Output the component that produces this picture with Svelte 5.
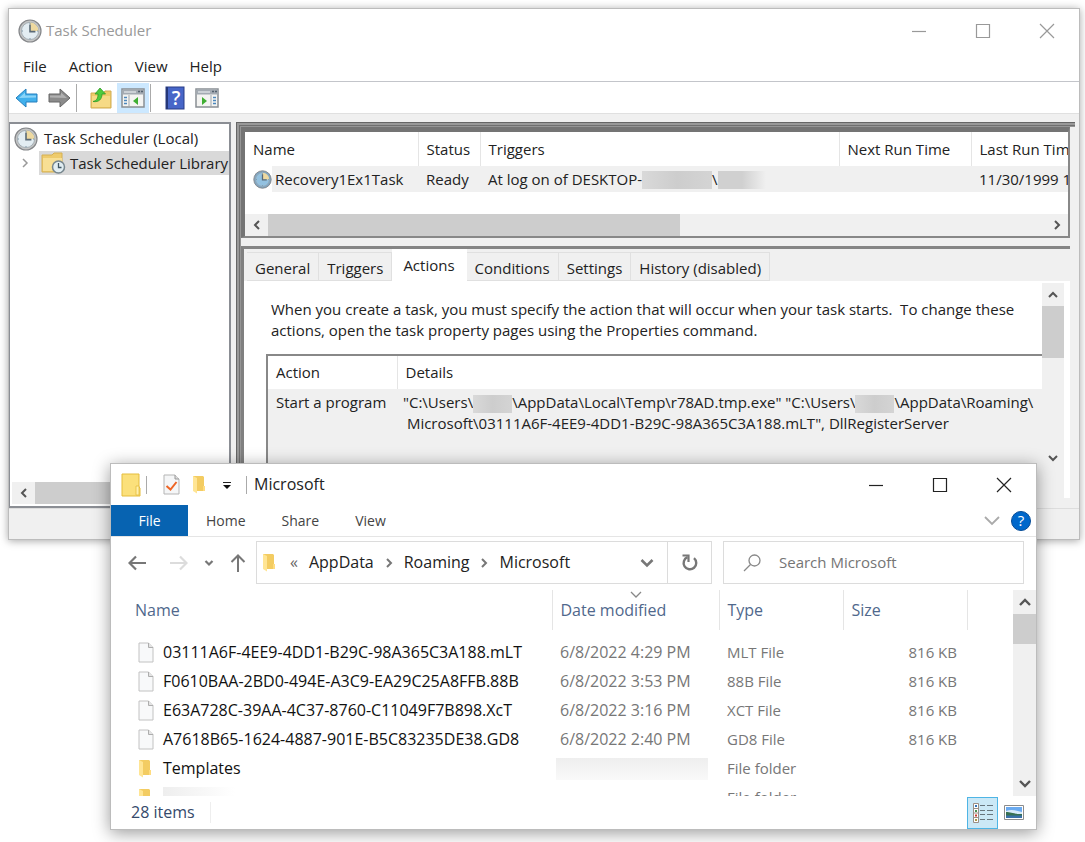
<script lang="ts">
	interface FileRow {
		name: string;
		modified: string;
		type: string;
		size: string;
		folder?: boolean;
	}

	const menus = ['File', 'Action', 'View', 'Help'];
	const tabs = ['General', 'Triggers', 'Actions', 'Conditions', 'Settings', 'History (disabled)'];
	const ribbon = ['File', 'Home', 'Share', 'View'];
	const crumbs = ['AppData', 'Roaming', 'Microsoft'];

	const files: FileRow[] = [
		{ name: '03111A6F-4EE9-4DD1-B29C-98A365C3A188.mLT', modified: '6/8/2022 4:29 PM', type: 'MLT File', size: '816 KB' },
		{ name: 'F0610BAA-2BD0-494E-A3C9-EA29C25A8FFB.88B', modified: '6/8/2022 3:53 PM', type: '88B File', size: '816 KB' },
		{ name: 'E63A728C-39AA-4C37-8760-C11049F7B898.XcT', modified: '6/8/2022 3:16 PM', type: 'XCT File', size: '816 KB' },
		{ name: 'A7618B65-1624-4887-901E-B5C83235DE38.GD8', modified: '6/8/2022 2:40 PM', type: 'GD8 File', size: '816 KB' },
		{ name: 'Templates', modified: '', type: 'File folder', size: '', folder: true },
		{ name: '', modified: '', type: 'File folder', size: '', folder: true }
	];

	let activeTab = $state('Actions');
	let search = $state('');
</script>

{#snippet clock(size: number, face: string, rim: string)}
	<svg width={size} height={size} viewBox="0 0 24 24" aria-hidden="true">
		<circle cx="12" cy="12" r="11" fill={rim} stroke="#85878a" stroke-width="1.2" />
		<circle cx="12" cy="12" r="8.6" fill={face} stroke="#9aa6ad" stroke-width="0.8" />
		<path d="M12 12V3.6a8.4 8.4 0 0 1 8.4 8.4z" fill="#eed9a0" />
		<path d="M12 5.4v7.2h5.4" fill="none" stroke="#5a6a76" stroke-width="1.6" />
		<path d="M12 4v1M12 19v1M4 12h1M19 12h1" stroke="#7890a0" stroke-width="1" />
	</svg>
{/snippet}

{#snippet chevron(points: string, color: string, weight: number)}
	<svg width="12" height="12" viewBox="0 0 12 12" aria-hidden="true">
		<polyline {points} fill="none" stroke={color} stroke-width={weight} />
	</svg>
{/snippet}

{#snippet folderIcon()}
	<svg width="14" height="19" viewBox="0 0 14 19" aria-hidden="true">
		<path d="M1 1h10l1 1v9l1 1v3l-1 1H4z" fill="#f3cc62" />
		<path d="M1 1l4 2v15.500l-4-2.500z" fill="#ffe594" />
		<path d="M11 11h2v5h-2z" fill="#ffdc80" />
	</svg>
{/snippet}

{#snippet fileIcon()}
	<svg width="16" height="21" viewBox="0 0 16 21" aria-hidden="true">
		<path d="M1 1h9.500l4.500 4.500v14.500H1z" fill="#f8f9fa" stroke="#c2c2c2" />
		<path d="M10.500 1v4.500H15" fill="#e4e4e4" stroke="#adadad" />
	</svg>
{/snippet}

{#snippet windowButtons()}
	<div class="window-buttons">
		<button aria-label="Minimize">
			<svg width="16" height="16" viewBox="0 0 16 16"><path d="M1 8.500h14" /></svg>
		</button>
		<button aria-label="Maximize">
			<svg width="16" height="16" viewBox="0 0 16 16"><path d="M1.500 1.500h13v13h-13z" /></svg>
		</button>
		<button aria-label="Close">
			<svg width="16" height="16" viewBox="0 0 16 16"><path d="M1 1l14 14M15 1L1 15" /></svg>
		</button>
	</div>
{/snippet}

{#snippet consoleIcon(flip: boolean)}
	<svg width="24" height="20" viewBox="0 0 24 20" aria-hidden="true">
		<path d="M1 1h22v18H1z" fill="#f4f4f2" stroke="#898e94" stroke-width="1.500" />
		<path d="M1.500 1.500h21v5h-21z" fill="#a3aab2" />
		<path d="M3 4h12" stroke="#dfe3e6" stroke-width="1.400" />
		<path d="M17 3.500h2M20 3.500h2" stroke="#53616e" stroke-width="1.500" />
		{#if flip}
			<path d="M16 7v12" stroke="#a0a6ab" />
			<path d="M18 9.500h3M18 12.500h3M18 15.500h3" stroke="#4b87bd" stroke-width="1.500" />
			<path d="M7 9l5 4-5 4z" fill="#3fae32" />
		{:else}
			<path d="M8 7v12" stroke="#a0a6ab" />
			<path d="M3 9.500h3M3 12.500h3M3 15.500h3" stroke="#4b87bd" stroke-width="1.500" />
			<path d="M17 9l-5 4 5 4z" fill="#3fae32" />
		{/if}
	</svg>
{/snippet}

<main class="desktop">
	<section class="window scheduler" aria-label="Task Scheduler">
		<header class="title-bar">
			{@render clock(24, '#e3edf2', '#c4c5c5')}
			<span class="title">Task Scheduler</span>
			{@render windowButtons()}
		</header>

		<nav class="menu-bar">
			{#each menus as menu (menu)}
				<button>{menu}</button>
			{/each}
		</nav>

		<div class="toolbar">
			<button aria-label="Back">
				<svg width="24" height="20" viewBox="0 0 24 20">
					<path d="M1 10L11 1v5h11v8H11v5z" fill="#41b0ec" stroke="#267fbd" />
					<path d="M4 10l6-5.500v3h11v2z" fill="#8bd4f8" />
				</svg>
			</button>
			<button aria-label="Forward">
				<svg width="24" height="20" viewBox="0 0 24 20">
					<path d="M23 10L13 1v5H2v8h11v5z" fill="#8b8b8b" stroke="#666" />
					<path d="M20 10l-6-5.500v3H3v2z" fill="#b1b1b1" />
				</svg>
			</button>
			<span class="separator"></span>
			<button aria-label="Up one level">
				<svg width="22" height="22" viewBox="0 0 22 22">
					<path d="M1 6h12l2-2h6v17H1z" fill="#efcb68" stroke="#d0ac55" />
					<path d="M2 9h18v11H2z" fill="#f6da86" />
					<path d="M3 14.500c4-1 5-3.500 5-7.500H5l5-6 5.500 6H12c0 5-3 8.500-9 7.500z" fill="#4ecb3d" stroke="#2e9a27" stroke-width="0.800" />
				</svg>
			</button>
			<button class="pressed" aria-label="Show console tree">{@render consoleIcon(false)}</button>
			<span class="separator"></span>
			<button aria-label="Help">
				<svg width="20" height="24" viewBox="0 0 20 24">
					<rect x="1" y="1" width="18" height="22" fill="#4766c8" stroke="#283c87" />
					<path d="M2 1v22" stroke="#253778" stroke-width="2" />
					<text x="11" y="19" text-anchor="middle" font-size="19" font-weight="600" fill="#fff">?</text>
				</svg>
			</button>
			<button aria-label="Show action pane">{@render consoleIcon(true)}</button>
		</div>

		<div class="console">
			<aside class="tree">
				<div class="tree-root">
					{@render clock(24, '#e3edf2', '#c4c5c5')}
					<span>Task Scheduler (Local)</span>
				</div>
				<div class="tree-child">
					<span class="expander">{@render chevron('4,2 8,6 4,10', '#9a9a9a', 1.5)}</span>
					<div class="tree-selected">
						<svg width="25" height="22" viewBox="0 0 25 22" aria-hidden="true">
							<path d="M1 3h10l2-2h8v19H1z" fill="#eecb6c" stroke="#d5b052" />
							<path d="M2 6h19v13H2z" fill="#f8df94" />
							<circle cx="17.500" cy="15" r="6" fill="#e1edf2" stroke="#76868e" stroke-width="1.500" />
							<path d="M17.500 11v4.500h3" fill="none" stroke="#3f5663" stroke-width="1.300" />
						</svg>
						<span>Task Scheduler Library</span>
					</div>
				</div>
				<div class="hscroll">
					<button aria-label="Scroll left">{@render chevron('8,2 4,6 8,10', '#555', 2)}</button>
					<div class="thumb tree-thumb"></div>
				</div>
			</aside>

			<div class="result">
				<div class="task-list">
					<table>
						<colgroup>
							<col class="c-name" /><col class="c-status" /><col class="c-triggers" /><col class="c-next" /><col class="c-last" />
						</colgroup>
						<thead>
							<tr>
								<th>Name</th>
								<th>Status</th>
								<th>Triggers</th>
								<th>Next Run Time</th>
								<th>Last Run Time</th>
							</tr>
						</thead>
						<tbody>
							<tr>
								<td class="task-name">
									<div>
										{@render clock(19, '#93c1e0', '#7fa6c4')}
										<span>Recovery1Ex1Task</span>
									</div>
								</td>
								<td>Ready</td>
								<td>At log on of DESKTOP-<span class="redacted host"></span>\<span class="redacted user"></span></td>
								<td></td>
								<td>11/30/1999 12:00:00 AM</td>
							</tr>
						</tbody>
					</table>
					<div class="hscroll">
						<button aria-label="Scroll left">{@render chevron('8,2 4,6 8,10', '#555', 2)}</button>
						<div class="thumb list-thumb"></div>
						<button class="end" aria-label="Scroll right">{@render chevron('4,2 8,6 4,10', '#555', 2)}</button>
					</div>
				</div>

				<div class="details">
					<div class="tabs" role="tablist">
						{#each tabs as tab (tab)}
							<button
								role="tab"
								class={{ active: activeTab === tab }}
								aria-selected={activeTab === tab}
								onclick={() => (activeTab = tab)}
							>
								{tab}
							</button>
						{/each}
					</div>
					<div class="tab-page">
						<div class="tab-content">
							<p>
								When you create a task, you must specify the action that will occur when your task starts.&nbsp; To change these<br />
								actions, open the task property pages using the Properties command.
							</p>
							<table class="actions">
								<colgroup><col class="c-action" /><col /></colgroup>
								<thead>
									<tr><th>Action</th><th>Details</th></tr>
								</thead>
								<tbody>
									<tr>
										<td>Start a program</td>
										<td class="command">
											"C:\Users\<span class="redacted"></span>\AppData\Local\Temp\r78AD.tmp.exe" "C:\Users\<span class="redacted"></span>\AppData\Roaming\<br />
											&nbsp;Microsoft\03111A6F-4EE9-4DD1-B29C-98A365C3A188.mLT", DllRegisterServer
										</td>
									</tr>
								</tbody>
							</table>
						</div>
						<div class="vscroll page-scroll">
							<button aria-label="Scroll up">{@render chevron('2,8 6,4 10,8', '#555', 2)}</button>
							<div class="thumb"></div>
							<button class="end" aria-label="Scroll down">{@render chevron('2,4 6,8 10,4', '#555', 2)}</button>
						</div>
					</div>
				</div>
			</div>
		</div>
		<footer class="scheduler-status"></footer>
	</section>

	<section class="window explorer" aria-label="Microsoft">
		<header class="title-bar">
			<svg width="20" height="24" viewBox="0 0 20 24" aria-hidden="true">
				<path d="M1 1h17v13l1 1v8H1z" fill="#fbe07b" stroke="#e5bd3c" />
				<path d="M15 13h3v9h-3z" fill="#fff0ad" stroke="#e5bd3c" stroke-width="0.800" />
			</svg>
			<span class="separator"></span>
			<div class="quick">
				<button aria-label="Properties">
					<svg width="17" height="21" viewBox="0 0 17 21">
						<path d="M1 1h11l4 4v15H1z" fill="#f5f6f7" stroke="#b5b5b5" />
						<path d="M12 1v4h4" fill="#ddd" stroke="#999" />
						<path d="M3.500 12l4 3.500 6-7.500" fill="none" stroke="#ee6424" stroke-width="2" />
					</svg>
				</button>
				<button aria-label="New folder">{@render folderIcon()}</button>
				<button aria-label="Customize Quick Access Toolbar">
					<svg width="10" height="10" viewBox="0 0 10 10"><path d="M1 2.500h8" stroke="#222" /><path d="M1 5h8L5 9z" fill="#111" /></svg>
				</button>
			</div>
			<span class="separator"></span>
			<span class="title">Microsoft</span>
			{@render windowButtons()}
		</header>

		<nav class="ribbon">
			{#each ribbon as item (item)}
				<button class={{ primary: item === 'File' }}>{item}</button>
			{/each}
			<div class="ribbon-end">
				<button aria-label="Expand the Ribbon">
					<svg width="16" height="10" viewBox="0 0 16 10"><path d="M1 1l7 7 7-7" fill="none" stroke="#aaa" stroke-width="1.800" /></svg>
				</button>
				<button class="help" aria-label="Help">?</button>
			</div>
		</nav>

		<div class="nav-row">
			<div class="history">
				<button aria-label="Back">
					<svg width="18" height="16" viewBox="0 0 18 16"><path d="M18 8H2M8 1.500L1.500 8 8 14.500" fill="none" stroke="#777" stroke-width="2.200" /></svg>
				</button>
				<button aria-label="Forward">
					<svg width="18" height="16" viewBox="0 0 18 16"><path d="M0 8h16M10 1.500L16.500 8 10 14.500" fill="none" stroke="#dcdcdc" stroke-width="2.200" /></svg>
				</button>
				<button class="recent" aria-label="Recent locations">
					<svg width="10" height="8" viewBox="0 0 10 8"><path d="M1.500 2L5 5.500 8.500 2" fill="none" stroke="#777" stroke-width="2.200" /></svg>
				</button>
				<button aria-label="Up">
					<svg width="16" height="18" viewBox="0 0 16 18"><path d="M8 18V2M1.500 8L8 1.500 14.500 8" fill="none" stroke="#777" stroke-width="2" /></svg>
				</button>
			</div>
			<div class="address">
				{@render folderIcon()}
				<span class="more">«</span>
				{#each crumbs as crumb, index (crumb)}
					{#if index > 0}
						<span class="crumb-sep">{@render chevron('4,2 8,6 4,10', '#777', 2)}</span>
					{/if}
					<button>{crumb}</button>
				{/each}
				<button class="address-drop" aria-label="Previous locations">
					<svg width="14" height="10" viewBox="0 0 14 10"><path d="M1.500 2L7 7.500 12.500 2" fill="none" stroke="#777" stroke-width="2.600" /></svg>
				</button>
				<button class="refresh" aria-label="Refresh">
					<svg width="18" height="18" viewBox="0 0 18 18">
						<path d="M11.500 3.200A6.300 6.300 0 1 1 5 4.200" fill="none" stroke="#777" stroke-width="2.400" transform="translate(18 0) scale(-1 1)" />
						<path d="M1.500 1.500H7.500v6.500" fill="none" stroke="#777" stroke-width="2.200" />
					</svg>
				</button>
			</div>
			<label class="search">
				<svg width="18" height="18" viewBox="0 0 18 18" aria-hidden="true">
					<circle cx="11.500" cy="6.500" r="5.500" fill="none" stroke="#888" stroke-width="1.300" />
					<path d="M7.500 10.500L1 17" stroke="#888" stroke-width="1.300" />
				</svg>
				<input type="search" placeholder="Search Microsoft" aria-label="Search Microsoft" bind:value={search} />
			</label>
		</div>

		<div class="files">
			<div class="file-list">
				<table>
					<colgroup>
						<col /><col class="c-date" /><col class="c-type" /><col class="c-size" /><col class="c-rest" />
					</colgroup>
					<thead>
						<tr>
							<th>Name</th>
							<th class="sorted">
								Date modified
								<svg width="12" height="7" viewBox="0 0 12 7" aria-hidden="true"><path d="M1 1l5 5 5-5" fill="none" stroke="#888" stroke-width="1.300" /></svg>
							</th>
							<th>Type</th>
							<th>Size</th>
							<td></td>
						</tr>
					</thead>
					<tbody>
						{#each files as file, index (index)}
							<tr>
								<td>
									<div class="file-name">
										<span class="file-icon">
											{#if file.folder}{@render folderIcon()}{:else}{@render fileIcon()}{/if}
										</span>
										{#if file.name}
											<span>{file.name}</span>
										{:else}
											<span class="faded short"></span>
										{/if}
									</div>
								</td>
								<td class={{ blank: !file.modified, modified: true }}>
									{#if file.modified}{file.modified}{:else if file.name}<span class="faded"></span>{/if}
								</td>
								<td>{file.type}</td>
								<td class="size">{file.size}</td>
								<td></td>
							</tr>
						{/each}
					</tbody>
				</table>
			</div>
			<div class="vscroll file-scroll">
				<button aria-label="Scroll up">{@render chevron('1,9 6,4 11,9', '#555', 2.4)}</button>
				<div class="thumb"></div>
				<button class="end" aria-label="Scroll down">{@render chevron('1,3 6,8 11,3', '#555', 2.4)}</button>
			</div>
		</div>

		<footer class="status-bar">
			<span class="count">28 items</span>
			<div class="views">
				<button class="selected" aria-label="Details view">
					<svg width="20" height="20" viewBox="0 0 20 20">
						<path d="M.5 .5h5v19h-5zM.5 5.500h5M.5 10h5M.5 14.500h5" fill="#fff" stroke="#9a8f86" />
						<path d="M2 3h2" stroke="#2f73b8" stroke-width="2" />
						<path d="M2 8h2" stroke="#4a9150" stroke-width="2" />
						<path d="M2 12.500h2" stroke="#cb3c30" stroke-width="2" />
						<path d="M2 17h2" stroke="#a99a4a" stroke-width="2" />
						<path d="M7 2.500h5M14 2.500h6M7 7.500h5M14 7.500h6M7 11.500h5M14 11.500h6M7 16.500h5M14 16.500h6" stroke="#67757d" />
					</svg>
				</button>
				<button aria-label="Large icons view">
					<svg width="20" height="15" viewBox="0 0 20 15">
						<path d="M.5 .5h19v14H.5z" fill="#fff" stroke="#8b8b8b" />
						<path d="M2 2h16v6H2z" fill="#6aaaf0" />
						<path d="M2 6c5-2 9-1 16 1v2H2z" fill="#d7eafa" />
						<path d="M2 7c5 0 7 2 16 2v2H2z" fill="#377052" />
						<path d="M2 10.500h16V13H2z" fill="#3970a8" />
					</svg>
				</button>
			</div>
		</footer>
	</section>
</main>

<style>
	:global(body) {
		margin: 0;
		background: #fff;
	}

	.desktop {
		position: relative;
		min-height: 100vh;
		box-sizing: border-box;
		padding: 8px 5px 0 8px;
		overflow: hidden;
		font-family: 'Open Sans', 'Noto Sans', sans-serif;
		font-size: 15px;
		line-height: 21px;
		color: #222;
	}

	.desktop * {
		box-sizing: border-box;
	}

	svg {
		display: block;
		flex-shrink: 0;
	}

	button {
		display: flex;
		align-items: center;
		justify-content: center;
		flex-shrink: 0;
		margin: 0;
		padding: 0;
		border: 0;
		background: none;
		color: inherit;
		font: inherit;
		white-space: nowrap;
	}

	table {
		border-collapse: collapse;
		table-layout: fixed;
	}

	th,
	td {
		padding: 0 0 0 8px;
		font-weight: 400;
		text-align: left;
		white-space: nowrap;
	}

	.window {
		display: flex;
		flex-direction: column;
		border: 1px solid #bcbcbc;
		background: #fff;
	}

	.title-bar {
		display: flex;
		align-items: center;
	}

	.window-buttons {
		display: flex;
		margin-left: auto;
	}

	.window-buttons button {
		width: 64px;
		height: 40px;
	}

	.window-buttons path {
		fill: none;
		stroke: currentColor;
		stroke-width: 1.2;
	}

	.separator {
		width: 1px;
		background: #aaa;
	}

	.thumb {
		background: #cdcdcd;
	}

	.hscroll {
		display: flex;
		height: 22px;
		background: #f0f0f0;
	}

	.hscroll button {
		width: 23px;
	}

	.vscroll {
		display: flex;
		flex-direction: column;
		flex-shrink: 0;
		background: #f0f0f0;
	}

	.vscroll button {
		height: 23px;
	}

	.vscroll .end {
		margin-top: auto;
	}

	.hscroll .end {
		margin-left: auto;
	}

	.redacted {
		display: inline-block;
		width: 39px;
		height: 18px;
		vertical-align: middle;
		background: linear-gradient(90deg, #d9d9d9, #cdcdcd 50%, #d4d4d4);
	}

	/* Task Scheduler */
	.scheduler {
		box-shadow: 0 1px 8px rgba(0, 0, 0, 0.35);
	}

	.scheduler .title-bar {
		height: 43px;
		padding-left: 9px;
		gap: 4px;
	}

	.scheduler .title,
	.scheduler .window-buttons {
		color: #999;
	}

	.menu-bar {
		display: flex;
		height: 30px;
		padding-left: 14px;
		gap: 22px;
		border-bottom: 1px solid #c3c5ca;
	}

	.toolbar {
		display: flex;
		align-items: center;
		height: 32px;
		padding-left: 2px;
		border-bottom: 1px solid #e0e0e0;
	}

	.toolbar button {
		width: 32px;
		height: 30px;
	}

	.toolbar .pressed {
		background: #cce8ff;
	}

	.toolbar .separator {
		height: 28px;
		margin: 0 8px 0 1px;
	}

	.console {
		display: flex;
		gap: 5px;
		padding: 8px 4px 0 0;
		background: #f0f0f0;
	}

	.tree {
		display: flex;
		flex-direction: column;
		flex: 0 0 222px;
		min-width: 0;
		height: 386px;
		padding: 2px 0 2px 2px;
		border: 2px solid #8b8e94;
		border-left-width: 1px;
		background: #fff;
	}

	.tree-root {
		display: flex;
		align-items: center;
		height: 25px;
		padding-left: 2px;
		gap: 6px;
	}

	.tree-child {
		display: flex;
		align-items: center;
		white-space: nowrap;
	}

	.expander {
		width: 27px;
		padding-left: 7px;
	}

	.tree-selected {
		display: flex;
		align-items: center;
		flex: 1;
		height: 24px;
		padding-left: 2px;
		gap: 4px;
		background: #d9d9d9;
	}

	.tree .hscroll {
		margin-top: auto;
	}

	.tree-thumb {
		width: 140px;
	}

	/* the ridges run along the top and left sides only */
	.result {
		flex: 1;
		min-width: 0;
		padding: 5px 5px 5px 5px;
		box-shadow:
			inset 1px 1px #666,
			inset 3px 3px #999,
			inset 4px 4px #707070,
			inset 5px 5px #959595;
	}

	.task-list {
		overflow: hidden;
		border-style: solid;
		border-color: #747474 #888 #888 #747474;
		border-width: 5px 2px 2px 4px;
		background: #fff;
	}

	.task-list table {
		width: 904px;
		margin-bottom: 22px;
	}

	.c-name {
		width: 173px;
	}

	.c-status {
		width: 62px;
	}

	.c-triggers {
		width: 359px;
	}

	.c-next {
		width: 132px;
	}

	.c-last {
		width: 178px;
	}

	.task-list th,
	.actions th {
		height: 34px;
		border-right: 1px solid #e5e5e5;
	}

	.task-list td {
		height: 26px;
		background: #f0f0f0;
	}

	.task-list .task-name {
		background: linear-gradient(90deg, #fff 27px, #f0f0f0 27px);
	}

	.task-name div {
		display: flex;
		align-items: center;
		gap: 3px;
	}

	.redacted.host {
		width: 70px;
	}

	.redacted.user {
		width: 48px;
		background: linear-gradient(90deg, #d0d0d0 50%, #f0f0f0);
	}

	.list-thumb {
		width: 50%;
	}

	.details {
		margin-top: 8px;
		border-left: 3px solid #808080;
		border-top: 3px solid #858585;
	}

	.tabs {
		display: flex;
		align-items: flex-end;
		height: 32px;
		padding-left: 3px;
	}

	.tabs button {
		height: 29px;
		padding: 4px 8px 0;
		border: 1px solid #e0e0e0;
		border-left-width: 0;
	}

	.tabs .active {
		height: 32px;
		padding: 0 11px;
		border-color: #fff;
		background: #fff;
	}

	.tab-page {
		display: flex;
		height: 217px;
		padding: 2px 6px 0 0;
		background: #fff;
	}

	.tab-content {
		flex: 1;
		min-width: 0;
		padding: 16px 0 0 22px;
		overflow: hidden;
	}

	.tab-content p {
		margin: 0 0 13px;
		padding-left: 5px;
		white-space: nowrap;
	}

	.actions {
		width: 100%;
		height: 160px;
		border: 2px solid #888;
		border-right: 0;
	}

	.c-action {
		width: 130px;
	}

	.actions th:last-child {
		border-right: 0;
	}

	.actions td {
		padding-top: 3px;
		background: #f0f0f0;
		vertical-align: top;
	}

	.actions .command {
		padding-left: 6px;
	}

	.page-scroll {
		width: 22px;
	}

	.page-scroll .thumb {
		height: 52px;
	}

	.page-scroll .end {
		margin-bottom: 29px;
	}

	.scheduler-status {
		height: 31px;
		border-top: 1px solid #ddd;
		background: #f0f0f0;
	}

	/* File Explorer */
	.explorer {
		position: absolute;
		top: 463px;
		left: 110px;
		right: 48px;
		font-size: 16px;
		box-shadow: 0 3px 16px rgba(0, 0, 0, 0.4);
	}

	.explorer .title-bar {
		height: 41px;
		padding-left: 10px;
	}

	.explorer .title-bar .separator {
		height: 18px;
		margin: 0 7px 0 5px;
	}

	.quick {
		display: flex;
		padding-left: 3px;
	}

	.quick button {
		width: 28px;
		height: 24px;
	}

	.ribbon {
		display: flex;
		height: 32px;
		border-bottom: 1px solid #e5e5e5;
		font-size: 14px;
		color: #444;
	}

	.ribbon > button {
		padding: 0 18px;
	}

	.ribbon .primary {
		width: 77px;
		background: #0763b1;
		color: #fff;
	}

	.ribbon-end {
		display: flex;
		align-items: center;
		margin-left: auto;
		padding-right: 5px;
		gap: 11px;
	}

	.ribbon .help {
		width: 20px;
		height: 20px;
		border: 1px solid #074c96;
		border-radius: 50%;
		background: #0068cb;
		color: #fff;
		font-size: 15px;
	}

	.nav-row {
		display: flex;
		padding: 4px 12px 6px 17px;
	}

	.history {
		display: flex;
		align-items: center;
		gap: 24px;
		width: 128px;
	}

	.history .recent {
		margin: 0 -8px 0 -8px;
	}

	.address,
	.search {
		display: flex;
		align-items: center;
		height: 43px;
		border: 1px solid #dcdcdc;
	}

	.address {
		flex: 1;
		padding-left: 5px;
	}

	.more {
		margin: 0 11px 0 14px;
		color: #666;
	}

	.crumb-sep {
		margin: 0 9px;
	}

	.address-drop {
		width: 40px;
		margin-left: auto;
	}

	.refresh {
		width: 44px;
		height: 100%;
		border-left: 1px solid #dcdcdc;
	}

	.search {
		width: 301px;
		margin-left: 11px;
		padding-left: 19px;
		gap: 18px;
		font-size: 15px;
	}

	.search input {
		flex: 1;
		min-width: 0;
		padding: 0;
		border: 0;
		outline: 0;
		background: none;
		font: inherit;
	}

	.search input::placeholder {
		color: #757575;
		opacity: 1;
	}

	.files {
		display: flex;
		height: 206px;
	}

	.file-list {
		flex: 1;
		min-width: 0;
		overflow: hidden;
	}

	.file-list table {
		width: 100%;
		color: #777;
	}

	.c-date {
		width: 167px;
	}

	.c-type,
	.c-size {
		width: 124px;
	}

	.c-rest {
		width: 46px;
	}

	.file-list th {
		height: 40px;
		border-right: 1px solid #e5e5e5;
		color: #50688c;
	}

	.file-list th:first-child {
		padding-left: 24px;
	}

	.sorted {
		position: relative;
	}

	.sorted svg {
		position: absolute;
		top: 1px;
		left: calc(50% - 6px);
	}

	.file-list tbody::before {
		content: '';
		display: block;
		height: 8px;
	}

	.file-list tbody td {
		height: 29px;
		font-size: 15px;
	}

	.file-list tbody .modified {
		font-size: 16px;
	}

	.file-name {
		display: flex;
		align-items: center;
		height: 29px;
		padding-left: 19px;
		color: #111;
		font-size: 16px;
	}

	.file-icon {
		width: 25px;
	}

	.file-list .size {
		padding-right: 10px;
		text-align: right;
	}

	.file-list .blank {
		padding-left: 4px;
	}

	.faded {
		display: block;
		width: 152px;
		height: 22px;
		background: linear-gradient(#eee, #f9f9f9);
	}

	.faded.short {
		width: 72px;
		background: linear-gradient(90deg, #eee, #fff);
	}

	.file-scroll {
		width: 23px;
	}

	.file-scroll .thumb {
		height: 30px;
	}

	.file-scroll button {
		height: 24px;
	}

	.status-bar {
		display: flex;
		align-items: center;
		height: 33px;
		padding: 0 12px 0 20px;
		color: #35496b;
	}

	.count {
		padding-right: 15px;
		border-right: 1px solid #eee;
	}

	.views {
		display: flex;
		align-items: center;
		margin-left: auto;
		gap: 6px;
	}

	.views .selected {
		width: 31px;
		height: 32px;
		border: 1px solid #4eb5e5;
		background: #cbe8f6;
	}
</style>
